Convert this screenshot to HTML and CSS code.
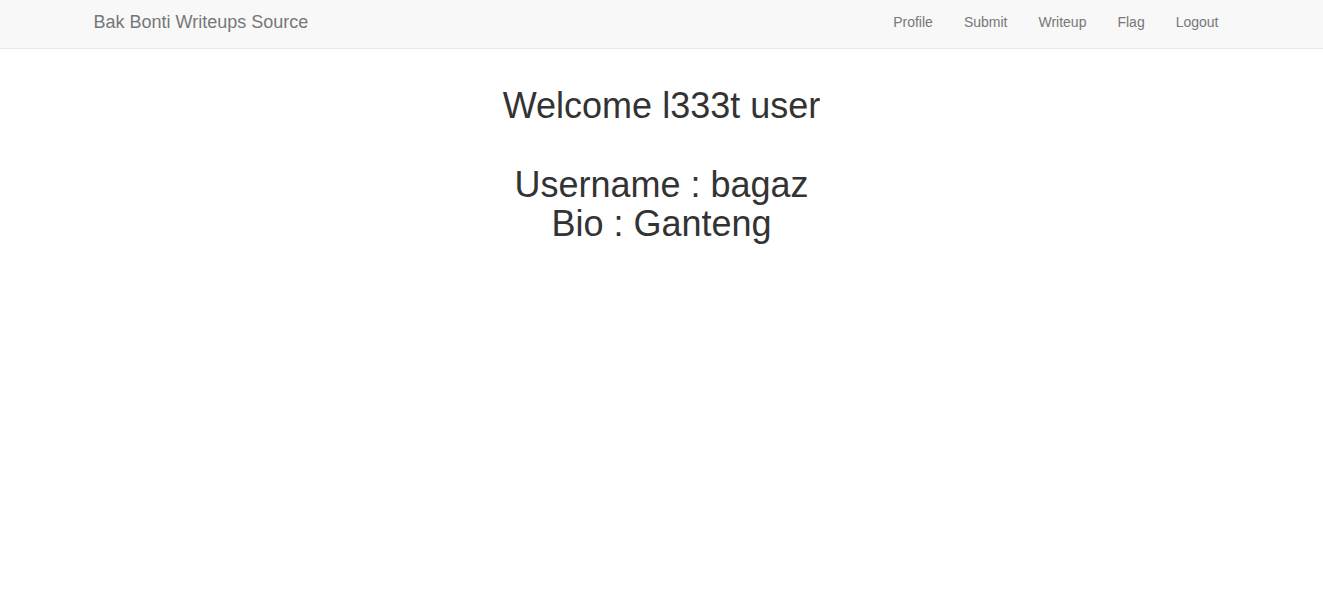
FILE: index.html
```html
<!DOCTYPE html>
<html>
<head>
<meta charset="utf-8">
<link rel="stylesheet" href="styles.css">
<title>Bak Bonti Writeups Source</title>
</head>
<body>
<nav class="navbar">
  <div class="container">
    <a class="brand" href="#">Bak Bonti Writeups Source</a>
    <ul class="nav">
      <li><a href="#">Profile</a></li>
      <li><a href="#">Submit</a></li>
      <li><a href="#">Writeup</a></li>
      <li><a href="#">Flag</a></li>
      <li><a href="#">Logout</a></li>
    </ul>
  </div>
</nav>
<main class="content">
  <h1 class="welcome">Welcome l333t user</h1>
  <h1 class="info">Username : bagaz<br>Bio : Ganteng</h1>
</main>
</body>
</html>
```

FILE: styles.css
```css
* { box-sizing: border-box; }
html, body { margin: 0; padding: 0; }
body {
  font-family: "Liberation Sans", Arial, Helvetica, sans-serif;
  font-size: 14px;
  line-height: 20px;
  color: #333;
  background: #fff;
}
.navbar {
  background: #f8f8f8;
  border-bottom: 1px solid #e7e7e7;
  height: 49px;
}
.container {
  width: 1170px;
  margin: 0 auto;
  padding: 0 15px;
  display: flex;
  justify-content: space-between;
  align-items: flex-start;
}
.brand {
  margin-left: -13px;
  padding: 12px 15px 0;
  font-size: 18px;
  line-height: 20px;
  color: #777;
  text-decoration: none;
}
.nav {
  list-style: none;
  margin: 0 -2px 0 0;
  padding: 0;
  display: flex;
}
.nav a {
  display: block;
  padding: 12px 15px 0 16px;
  line-height: 20px;
  color: #777;
  text-decoration: none;
}
.content {
  display: flex;
  flex-direction: column;
  align-items: center;
  text-align: center;
  padding-top: 37px;
}
.content h1 {
  margin: 0;
  font-size: 36px;
  font-weight: 500;
  line-height: 1.1;
}
.info { margin-top: 39px !important; }
```
